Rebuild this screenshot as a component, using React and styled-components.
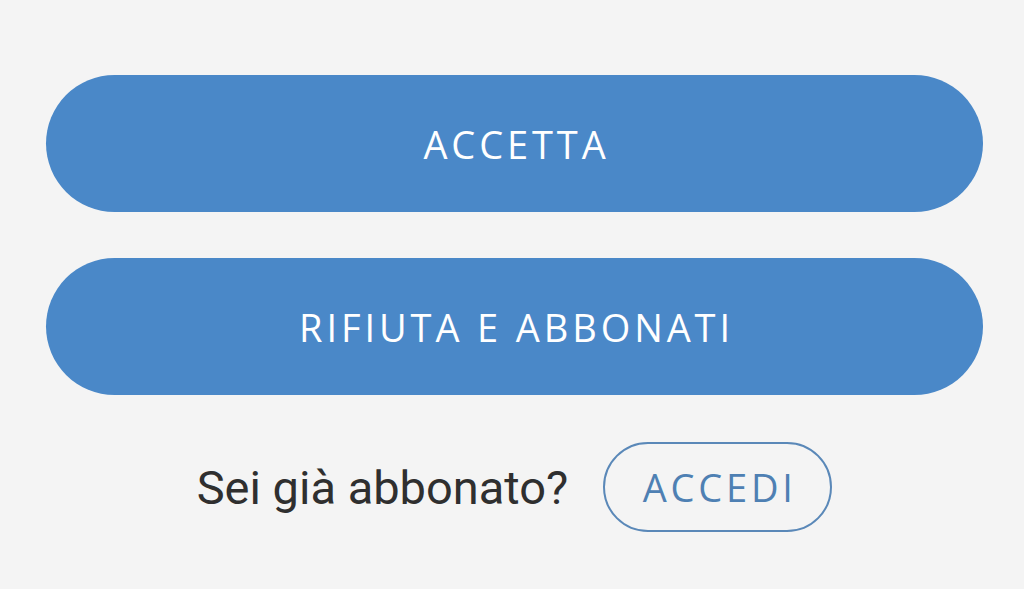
import React from "react";
import styled, { createGlobalStyle } from "styled-components";

const Global = createGlobalStyle`
  html, body { margin: 0; padding: 0; background: #f4f4f4; }
  body { font-family: "Open Sans", "Noto Sans", sans-serif; }
`;

const Page = styled.div`
  width: 1024px;
  height: 589px;
  box-sizing: border-box;
  padding: 75px 41px 0 46px;
  display: flex;
  flex-direction: column;
  background: #f4f4f4;
`;

const Primary = styled.button`
  height: 137px;
  width: 100%;
  border: none;
  border-radius: 69px;
  background: #4a88c8;
  color: #ffffff;
  font-family: "Open Sans", sans-serif;
  font-size: 38px;
  font-weight: 400;
  letter-spacing: 3.9px;
  display: flex;
  align-items: center;
  justify-content: center;
  padding: 0 0 0 4px;
  margin-bottom: ${(p) => p.$mb || 0}px;
`;

const Row = styled.div`
  display: flex;
  align-items: center;
  justify-content: center;
  gap: 35px;
  margin-top: 47px;
`;

const Question = styled.span`
  font-family: "Roboto", sans-serif;
  font-size: 47px;
  color: #2f2f2f;
`;

const Outline = styled.button`
  height: 90px;
  width: 229px;
  box-sizing: border-box;
  border: 2.5px solid #5a88b8;
  border-radius: 45px;
  background: transparent;
  color: #4e80b3;
  font-family: "Open Sans", sans-serif;
  font-size: 38px;
  letter-spacing: 3.8px;
  display: flex;
  align-items: center;
  justify-content: center;
  padding: 0 0 0 4px;
`;

export default function App() {
  return (
    <>
      <Global />
      <Page>
        <Primary $mb={46}>ACCETTA</Primary>
        <Primary>RIFIUTA E ABBONATI</Primary>
        <Row>
          <Question>Sei già abbonato?</Question>
          <Outline>ACCEDI</Outline>
        </Row>
      </Page>
    </>
  );
}
